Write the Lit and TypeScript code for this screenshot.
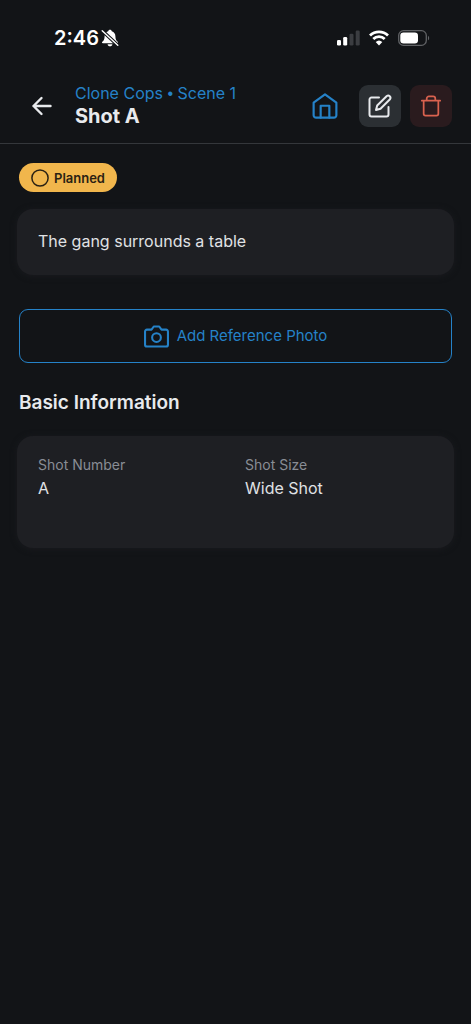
import { LitElement, html, css, svg } from "lit";
import { customElement, property } from "lit/decorators.js";

interface InfoField {
  label: string;
  value: string;
}

const stroke = (size: number, body: unknown, width = 2) => html`<svg
  width=${size}
  height=${size}
  viewBox="0 0 24 24"
  fill="none"
  stroke="currentColor"
  stroke-width=${width}
  stroke-linecap="round"
  stroke-linejoin="round"
  aria-hidden="true"
>${body}</svg>`;

const arrowLeft = svg`<path d="M20.500 12H3.500M11.500 4 3.500 12l8 8"/>`;
const home = svg`<path d="M1.500 8.800 12 1.200l10.500 7.600V20.500a2.300 2.300 0 0 1-2.300 2.300H3.800a2.300 2.300 0 0 1-2.300-2.300z"/><path d="M8 22.800V11.800h8v11"/>`;
const edit = svg`<path d="M11 3.500H3.500a2 2 0 0 0-2 2v15a2 2 0 0 0 2 2h15a2 2 0 0 0 2-2V13"/><path d="M18.800 2a2.300 2.300 0 0 1 3.200 3.200L12.500 14.800 8 16l1.200-4.500z"/>`;
const trash = svg`<path d="M2 6.200h20M20 6.200v14.300a2 2 0 0 1-2 2H6a2 2 0 0 1-2-2V6.200M7.300 6.200V4a2.500 2.500 0 0 1 2.500-2.500h4.400A2.500 2.500 0 0 1 16.700 4v2.200"/>`;
const camera = svg`<path d="M23 19.800a1.800 1.800 0 0 1-1.800 1.800H2.800A1.800 1.800 0 0 1 1 19.800V7.200a1.800 1.800 0 0 1 1.800-1.800h4.400l2.200-3h5.200l2.200 3h4.400A1.800 1.800 0 0 1 23 7.200z"/><circle cx="12" cy="13" r="4.200"/>`;
const circle = svg`<circle cx="12" cy="12" r="10.800"/>`;

@customElement("status-bar")
class StatusBar extends LitElement {
  static styles = css`
    :host {
      display: flex;
      align-items: center;
      justify-content: space-between;
      height: 28px;
      padding: 24px 41px 20px 54px;
      color: #fff;
    }
    .side {
      display: flex;
      align-items: center;
    }
    .time {
      font-size: 20px;
      line-height: 28px;
      font-weight: 600;
      margin-right: 2px;
    }
    .icons {
      gap: 9px;
    }
    svg {
      display: block;
    }
  `;

  render() {
    return html`
      <div class="side">
        <span class="time">2:46</span>
        <svg width="18" height="18" viewBox="0 0 18 18" aria-label="Silent mode" role="img">
          <path fill="#fff" d="M9 .8c1 0 1.700.6 1.800 1.500 2.300.8 3.600 2.600 3.600 4.900 0 3.300.9 4.300 2.300 5.600.7.700.3 1.500-.6 1.500H1.900c-.9 0-1.300-.8-.6-1.500C2.700 11.500 3.600 10.500 3.600 7.200c0-2.300 1.300-4.100 3.600-4.900C7.300 1.400 8 .8 9 .8zM6.600 15.200h4.800c-.2 1.300-1.100 2.100-2.400 2.100s-2.200-.8-2.400-2.100z"/>
          <path stroke="#121417" stroke-width="3.400" d="m1 1.500 16 15"/>
          <path stroke="#fff" stroke-width="1.400" stroke-linecap="round" d="m1.200 1.700 15.600 14.600"/>
        </svg>
      </div>
      <div class="side icons">
        <svg width="24" height="16" viewBox="0 0 24 16" aria-label="Signal" role="img">
          <rect x="1" y="10" width="4" height="5.500" rx="1.300" fill="#fff"/>
          <rect x="7.200" y="7" width="4" height="8.500" rx="1.300" fill="#fff"/>
          <rect x="13.500" y="3.800" width="4" height="11.700" rx="1.300" fill="#3b3d41"/>
          <rect x="19.700" y="0.500" width="4" height="15" rx="1.300" fill="#3b3d41"/>
        </svg>
        <svg width="20" height="16" viewBox="0 0 20 16" aria-label="Wi-Fi" role="img">
          <g fill="none" stroke="#fff" stroke-width="2.800">
            <path d="M1 5.500a13 13 0 0 1 18 0"/>
            <path d="M4.300 9a8.200 8.200 0 0 1 11.400 0"/>
          </g>
          <path fill="#fff" d="M6.700 12a4.800 4.800 0 0 1 6.600 0L10 15.500z"/>
        </svg>
        <svg width="32" height="16" viewBox="0 0 32 16" aria-label="Battery" role="img">
          <rect x=".7" y=".7" width="27.600" height="14.600" rx="4.800" fill="none" stroke="#606265" stroke-width="1.300"/>
          <rect x="2.300" y="2.500" width="17.700" height="11" rx="3.200" fill="#fff"/>
          <path d="M30 5.700c1.600.7 1.600 3.900 0 4.600z" fill="#606265"/>
        </svg>
      </div>
    `;
  }
}

@customElement("shot-header")
class ShotHeader extends LitElement {
  @property() project = "";
  @property() scene = "";
  @property() heading = "";

  static styles = css`
    :host {
      display: flex;
      align-items: center;
      gap: 9px;
      padding: 11px 19px 14px 30px;
      border-bottom: 1px solid #34373b;
    }
    button,
    .home {
      display: flex;
      align-items: center;
      justify-content: center;
      box-sizing: border-box;
      flex: none;
      width: 42px;
      height: 42px;
      margin: 0;
      padding: 0;
      border: 0;
      border-radius: 9px;
      background: none;
      color: #e8eaed;
    }
    .back {
      width: 24px;
    }
    .titles {
      flex: 1;
      min-width: 0;
      padding-left: 12px;
    }
    .trail {
      display: block;
      font-size: 16px;
      line-height: 20px;
      color: #2582c8;
      text-decoration: none;
      white-space: nowrap;
    }
    .dot {
      font-family: "Liberation Sans", sans-serif;
      line-height: 1;
    }
    h1 {
      margin: 0;
      font-size: 20px;
      line-height: 26px;
      font-weight: 700;
      color: #e8eaed;
    }
    .home {
      width: 50px;
      color: #2582c8;
    }
    .edit {
      background: #2b2f33;
    }
    .delete {
      background: #2a1b1e;
      color: #d9624f;
    }
  `;

  render() {
    return html`
      <button class="back" aria-label="Back">${stroke(24, arrowLeft, 2.4)}</button>
      <div class="titles">
        <a class="trail" href="#scene">${this.project} <span class="dot">•</span> ${this.scene}</a>
        <h1>${this.heading}</h1>
      </div>
      <a class="home" href="#home" aria-label="Home">${stroke(26, home)}</a>
      <button class="edit" aria-label="Edit shot">${stroke(24, edit)}</button>
      <button class="delete" aria-label="Delete shot">${stroke(22, trash, 1.9)}</button>
    `;
  }
}

@customElement("app-root")
class AppRoot extends LitElement {
  private fields: InfoField[] = [
    { label: "Shot Number", value: "A" },
    { label: "Shot Size", value: "Wide Shot" },
  ];

  static styles = css`
    :host {
      display: block;
      min-height: 100vh;
      background: #121417;
      color: #e0e2e5;
      font-family: Inter, "Liberation Sans", sans-serif;
    }
    main {
      display: flex;
      flex-direction: column;
      padding: 19px 17px;
    }
    .status {
      display: flex;
      align-items: center;
      align-self: flex-start;
      gap: 5px;
      height: 29px;
      margin: 0 2px 17px;
      padding: 0 12px;
      border-radius: 15px;
      background: #f1b64c;
      color: #2a2113;
      font-size: 13px;
      line-height: 16px;
      font-weight: 600;
    }
    .status svg {
      flex: none;
    }
    .card {
      margin: 0;
      border-radius: 16px;
      background: #1e1f23;
      box-shadow: 0 1px 6px #1a1b1f;
      font-size: 16px;
      line-height: 24px;
    }
    .description {
      padding: 20px 21px 22px;
    }
    .photo {
      display: flex;
      align-items: center;
      justify-content: center;
      gap: 8px;
      height: 54px;
      margin: 34px 2px 26px;
      border: 1px solid #2582c8;
      border-radius: 9px;
      background: none;
      color: #2582c8;
      font: inherit;
      font-size: 15px;
      line-height: 20px;
    }
    h2 {
      margin: 0 2px 19px;
      font-size: 19px;
      line-height: 28px;
      font-weight: 600;
      color: #e8eaed;
    }
    .info {
      display: grid;
      grid-template-columns: 1fr 1fr;
      gap: 19px;
      padding: 18px 21px 48px;
    }
    dt {
      font-size: 14px;
      line-height: 22px;
      color: #898d95;
    }
    dd {
      margin: 0;
    }
  `;

  render() {
    return html`
      <status-bar></status-bar>
      <shot-header project="Clone Cops" scene="Scene 1" heading="Shot A"></shot-header>
      <main>
        <span class="status">${stroke(18, circle, 2)}Planned</span>
        <p class="card description">The gang surrounds a table</p>
        <button class="photo">${stroke(25, camera)}Add Reference Photo</button>
        <h2>Basic Information</h2>
        <dl class="card info">
          ${this.fields.map(
            (field) => html`<div>
              <dt>${field.label}</dt>
              <dd>${field.value}</dd>
            </div>`
          )}
        </dl>
      </main>
    `;
  }
}
